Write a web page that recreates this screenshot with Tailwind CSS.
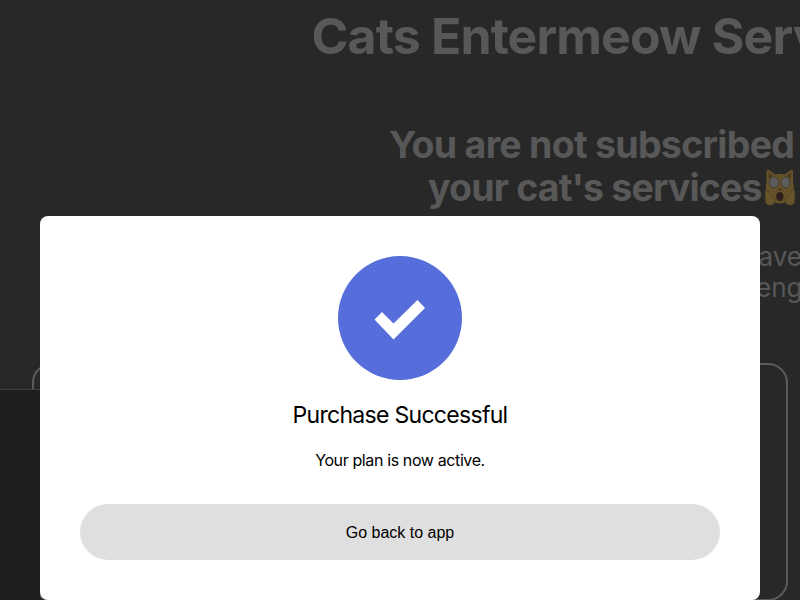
<!DOCTYPE html>
<html lang="en">
<head>
<meta charset="utf-8">
<title>Cats Entermeow Services</title>
<script src="https://cdn.jsdelivr.net/npm/@tailwindcss/browser@4"></script>
</head>
<body class="h-screen overflow-hidden bg-[#282828] font-[Inter,'Liberation_Sans',sans-serif]">
<div class="relative h-[600px] w-[800px] overflow-hidden bg-[#282828]">
  <main class="flex flex-col whitespace-nowrap text-[#585858]">
    <h1 class="mt-[6px] pl-[311.5px] text-[50px] leading-[60px] font-bold tracking-[-0.88px]">Cats Entermeow Services</h1>
    <h2 class="mt-[57px] text-[37.5px] leading-[43px] font-bold tracking-[-0.8px]">
      <span class="block pl-[389px] tracking-[-0.73px]">You are not subscribed</span>
      <span class="flex items-start pl-[428px] tracking-[-0.85px]">your cat's services
        <svg class="mt-[2px] ml-[2.5px] h-[38px] w-[32px] shrink-0" viewBox="0 0 32 38">
          <path d="M2.5 14V3Q3 1 5 2L11 6.5Q16 5 20.5 6.5L27 2Q29 1 29 3V14Q31 21 28 27Q24 35.5 15.8 35.5Q8 35.5 3.5 27Q.5 21 2.5 14Z" fill="#64522a"/>
          <path d="M4.5 4.5 9 8 4.5 11ZM27 4.5 22.5 8 27 11Z" fill="#4c3823"/>
          <ellipse cx="10" cy="14.5" rx="4.6" ry="5.4" fill="#5c5c5c" stroke="#423d30"/>
          <ellipse cx="21.5" cy="14.5" rx="4.6" ry="5.4" fill="#5c5c5c" stroke="#423d30"/>
          <path d="M13.5 20.5H18L15.8 23Z" fill="#493026"/>
          <path d="M1 23Q4 21 5 25L10.5 30Q12 36 7 37Q3 38 1.5 34ZM31 23Q28 21 27 25L21.5 30Q20 36 25 37Q29 38 30.5 34Z" fill="#66542a" stroke="#514222" stroke-width=".6"/>
          <ellipse cx="15.8" cy="28.5" rx="3.7" ry="4.6" fill="#2b201d"/>
        </svg>
      </span>
    </h2>
    <p class="mt-[32px] text-[26px] leading-[31px]">
      <span class="block pl-[758.5px]">ave</span>
      <span class="block pl-[756px]">enge</span>
    </p>
    <section class="mt-[60px] ml-8 h-[238px] w-[756px] rounded-[20px] border-2 border-[#5b5b5b]"></section>
  </main>
  <aside class="absolute top-[389px] left-0 h-[211px] w-10 border-t border-[#414141] bg-[#1f1f1f]"></aside>
  <div role="dialog" class="absolute inset-x-10 top-[216px] flex h-[384px] flex-col items-center rounded-lg bg-white p-10 text-black">
    <svg class="h-[124px] w-[124px] shrink-0" viewBox="0 0 124 124">
      <circle cx="62" cy="62" r="62" fill="#566ddc"/>
      <path d="M36.5 63.5 44 56 55.5 67.5 79.5 44 87 52 55.5 83.5Z" fill="#fff"/>
    </svg>
    <h3 class="mt-5 text-[23px] leading-[30px] font-normal tracking-[-0.7px]">Purchase Successful</h3>
    <p class="mt-[18px] text-[16px] leading-6 tracking-[-0.38px]">Your plan is now active.</p>
    <button class="mt-8 h-14 w-full shrink-0 rounded-full bg-[#dfdfdf] pt-[2px] font-['Liberation_Sans',Arial,sans-serif] text-[16px]">Go back to app</button>
  </div>
</div>
</body>
</html>
